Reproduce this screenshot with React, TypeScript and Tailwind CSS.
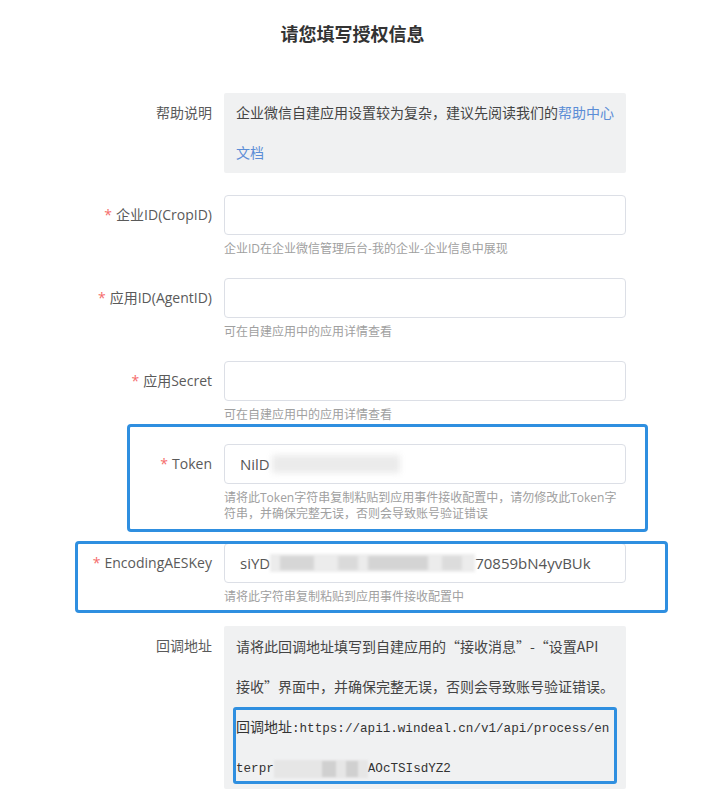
const font = {
  fontFamily: '"Open Sans", "Noto Sans CJK SC", sans-serif',
};
const cjk = { fontFamily: '"Noto Sans CJK SC", sans-serif' };
const mono = { fontFamily: '"Liberation Mono", monospace' };

const Blur = ({ w, className = "" }: { w: number; className?: string }) => (
  <span
    className={`inline-block h-[18px] align-middle bg-[#e4e4e4] blur-[2px] ${className}`}
    style={{ width: w }}
  />
);

const Row = ({
  label,
  required,
  children,
  hint,
}: {
  label: string;
  required?: boolean;
  children: React.ReactNode;
  hint?: React.ReactNode;
}) => (
  <div className="flex mb-[21px]">
    <div className="w-[212px] shrink-0 text-right text-[14px] leading-[40px] text-[#5a5a5a]">
      {required && <span className="text-[#f56c6c] mr-[4px]">*</span>}
      {label}
    </div>
    <div className="ml-[12px] w-[402px]">
      {children}
      {hint && (
        <div className="mt-[6px] text-[12px] leading-[16px] text-[#a0a0a0]">{hint}</div>
      )}
    </div>
  </div>
);

const Input = ({ children }: { children?: React.ReactNode }) => (
  <div className="h-[40px] rounded-[4px] border border-[#dcdfe6] bg-white px-[15px] flex items-center text-[15px] text-[#555] whitespace-nowrap overflow-hidden">
    {children}
  </div>
);

export default function App() {
  return (
    <div className="w-[705px] min-h-[801px] bg-white" style={font}>
      <h1 className="pt-[22px] text-center text-[18px] leading-[24px] font-bold text-[#333]">
        请您填写授权信息
      </h1>

      <div className="mt-[47px]">
        <div className="flex mb-[22px]">
          <div className="w-[212px] shrink-0 text-right text-[14px] leading-[40px] text-[#5a5a5a]">
            帮助说明
          </div>
          <div className="ml-[12px] w-[402px] rounded-[2px] bg-[#f0f1f2] px-[12px] text-[14px] leading-[40px] text-[#444]">
            <div className="whitespace-nowrap">
              企业微信自建应用设置较为复杂，建议先阅读我们的
              <span className="text-[#5b8dd6]">帮助中心</span>
            </div>
            <div className="text-[#5b8dd6]">文档</div>
          </div>
        </div>

        <Row label="企业ID(CropID)" required hint="企业ID在企业微信管理后台-我的企业-企业信息中展现">
          <Input />
        </Row>

        <Row label="应用ID(AgentID)" required hint="可在自建应用中的应用详情查看">
          <Input />
        </Row>

        <Row label="应用Secret" required hint="可在自建应用中的应用详情查看">
          <Input />
        </Row>

        <div className="relative">
          <Row
            label="Token"
            required
            hint="请将此Token字符串复制粘贴到应用事件接收配置中，请勿修改此Token字符串，并确保完整无误，否则会导致账号验证错误"
          >
            <Input>
              NilD
              <Blur w={128} className="ml-[2px] bg-[#ebebeb] blur-[3px]" />
            </Input>
          </Row>
          <div className="absolute left-[127px] top-[-20px] w-[521px] h-[108px] rounded-[4px] border-[3px] border-[#2f8fe0]" />
        </div>

        <div className="relative">
          <Row label="EncodingAESKey" required hint="请将此字符串复制粘贴到应用事件接收配置中">
            <Input>
              siYD
              <span className="inline-flex items-center h-[18px] w-[205px] bg-[#ececec] blur-[1.5px]">
                <span className="ml-[10px] w-[34px] h-[14px] bg-[#d6d6d6]" />
                <span className="ml-[24px] w-[20px] h-[14px] bg-[#dadada]" />
                <span className="ml-[10px] w-[60px] h-[14px] bg-[#d4d4d4]" />
                <span className="ml-[14px] w-[20px] h-[14px] bg-[#dcdcdc]" />
              </span>
              70859bN4yvBUk
            </Input>
          </Row>
          <div className="absolute left-[75px] top-[-2px] w-[593px] h-[72px] rounded-[4px] border-[3px] border-[#2f8fe0]" />
        </div>

        <div className="flex">
          <div className="w-[212px] shrink-0 text-right text-[14px] leading-[40px] text-[#5a5a5a]">
            回调地址
          </div>
          <div
            className="relative ml-[12px] w-[402px] rounded-[2px] bg-[#f0f1f2] px-[12px] text-[14px] leading-[40px] text-[#444]"
            style={cjk}
          >
            <div className="whitespace-nowrap">请将此回调地址填写到自建应用的“接收消息”-“设置API</div>
            <div className="whitespace-nowrap">接收”界面中，并确保完整无误，否则会导致账号验证错误。</div>
            <div className="whitespace-nowrap text-[#333]">
              回调地址
              <span className="text-[12.6px]" style={mono}>
                :https://api1.windeal.cn/v1/api/process/en
              </span>
            </div>
            <div className="whitespace-nowrap text-[12.6px] text-[#333]" style={mono}>
              terpr
              <span className="inline-flex items-center h-[18px] w-[94px] bg-[#e6e6e6] blur-[1px] align-middle">
                <span className="ml-[48px] w-[14px] h-[16px] bg-[#d0d0d0]" />
                <span className="ml-[10px] w-[12px] h-[16px] bg-[#d0d0d0]" />
              </span>
              AOcTSIsdYZ2
            </div>
            <div className="absolute left-[9px] top-[81px] w-[384px] h-[77px] rounded-[3px] border-[3px] border-[#2f8fe0]" />
          </div>
        </div>
      </div>
    </div>
  );
}
